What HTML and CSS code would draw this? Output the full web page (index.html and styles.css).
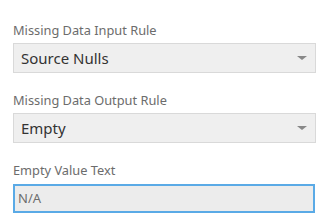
FILE: index.html
```html
<!DOCTYPE html>
<html lang="en">
<head>
    <meta charset="UTF-8" />
    <title>Missing Data</title>
    <link rel="stylesheet" href="styles.css">
</head>
<body>
    <div class="panel">
        <div class="form-group">
            <div class="label">Missing Data Input Rule</div>
            <div class="dropdown">
                <span>Source Nulls</span>
                <span class="arrow"></span>
            </div>
        </div>
        <div class="form-group">
            <div class="label">Missing Data Output Rule</div>
            <div class="dropdown">
                <span>Empty</span>
                <span class="arrow"></span>
            </div>
        </div>
        <div class="form-group text-group">
            <div class="label">Empty Value Text</div>
            <div class="textbox">N/A</div>
        </div>
    </div>
</body>
</html>
```

FILE: styles.css
```css
:root {
    --label-color: #6c6c6c;
    --value-color: #333;
    --field-bg: #efefef;
    --field-border: #d9d9d9;
    --focus-color: #5aaae6;
}

body {
    margin: 0;
    background: #fff;
    font-family: 'Noto Sans', sans-serif;
}

.panel {
    padding: 22px 4px 0 13px;
}

.form-group {
    margin-bottom: 19px;
}

.label {
    color: var(--label-color);
    font-size: 12.8px;
    line-height: 16px;
    margin-bottom: 5px;
}

.dropdown {
    display: flex;
    align-items: center;
    justify-content: space-between;
    height: 28px;
    padding: 0 7px 0 7px;
    background: var(--field-bg);
    border: 1px solid var(--field-border);
    color: var(--value-color);
    font-size: 15px;
}

.arrow {
    width: 0;
    height: 0;
    border-left: 5px solid transparent;
    border-right: 5px solid transparent;
    border-top: 4px solid #888;
    margin-right: 1px;
}

.text-group .label {
    margin-bottom: 6px;
}

.textbox {
    height: 25px;
    line-height: 25px;
    margin-right: 1px;
    padding: 0 3px;
    background: #ececec;
    border: 2px solid var(--focus-color);
    color: var(--label-color);
    font-size: 13px;
}
```
